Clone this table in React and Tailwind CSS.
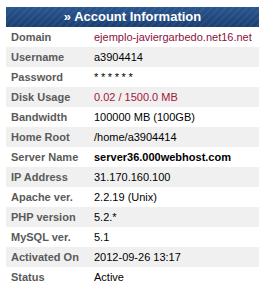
import React from "react";

const rows = [
  { label: "Domain", value: "ejemplo-javiergarbedo.net16.net", cls: "text-[#8a1240]" },
  { label: "Username", value: "a3904414" },
  { label: "Password", value: "******", cls: "tracking-[2.6px]" },
  { label: "Disk Usage", value: "0.02 / 1500.0 MB", cls: "text-[#a3173a]" },
  { label: "Bandwidth", value: "100000 MB (100GB)" },
  { label: "Home Root", value: "/home/a3904414" },
  { label: "Server Name", value: "server36.000webhost.com", cls: "font-bold text-[11.6px]" },
  { label: "IP Address", value: "31.170.160.100" },
  { label: "Apache ver.", value: "2.2.19 (Unix)" },
  { label: "PHP version", value: "5.2.*" },
  { label: "MySQL ver.", value: "5.1" },
  { label: "Activated On", value: "2012-09-26 13:17" },
  { label: "Status", value: "Active" },
];

export default function App() {
  return (
    <div className="w-[265px] h-[291px] bg-white pt-[7px] px-[6px] font-['Liberation_Sans',Arial,sans-serif]">
      {/* Header */}
      <div className="h-[20px] flex items-center justify-center text-white font-bold text-[13px] bg-[#1f4a82] bg-[repeating-linear-gradient(135deg,rgba(255,255,255,0.05)_0px,rgba(255,255,255,0.05)_2px,transparent_2px,transparent_5px),linear-gradient(#2a5590,#1a3f72)]">
        » Account Information
      </div>

      {/* Rows */}
      <div className="flex flex-col">
        {rows.map((r, i) => (
          <div
            key={r.label}
            className={`h-[20px] flex items-center ${i % 2 === 1 ? "bg-[#f0f0f0]" : "bg-white"}`}
          >
            <div className="w-[88px] pl-[5px] text-[11px] font-bold text-[#5a5a5a]">{r.label}</div>
            <div className={`text-[11px] ${r.cls || "text-black"}`}>{r.value}</div>
          </div>
        ))}
      </div>
    </div>
  );
}
